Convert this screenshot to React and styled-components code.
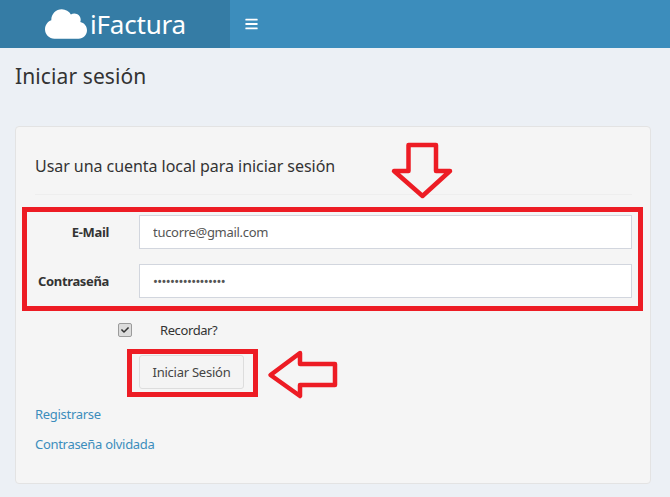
import React from 'react'
import styled, { createGlobalStyle } from 'styled-components'
import { FaBars, FaCloud, FaCheck } from 'react-icons/fa'

const GlobalStyle = createGlobalStyle`
    html, body {
        margin: 0;
        padding: 0;
        background: #ecf0f5;
    }
    body {
        font-family: "Noto Sans", "Open Sans", sans-serif;
        color: #333;
    }
`

const Page = styled.div`
    position: relative;
    width: 670px;
    height: 497px;
    overflow: hidden;
    background: #ecf0f5;
`

const Header = styled.header`
    display: flex;
    height: 48px;
    background: #3c8dbc;
`

const Logo = styled.div`
    display: flex;
    align-items: center;
    width: 230px;
    padding-left: 45px;
    box-sizing: border-box;
    background: #357ca5;
    color: #fff;
    font-size: 26px;
    letter-spacing: -0.2px;

    svg {
        width: 42px;
        height: 42px;
        margin-right: 3px;
    }
`

const MenuToggle = styled.div`
    display: flex;
    align-items: center;
    padding-left: 15px;
    color: #fff;

    svg {
        width: 13px;
        height: 14px;
    }
`

const Title = styled.h1`
    margin: 0;
    padding: 12px 15px 0;
    height: 65px;
    box-sizing: border-box;
    font-size: 21px;
    line-height: 32px;
    font-weight: 400;
    letter-spacing: 0.1px;
    color: #333;
`

const Card = styled.section`
    margin: 13px 19px 0 15px;
    height: 358px;
    padding: 28px 18px 0 19px;
    box-sizing: border-box;
    background: #f5f5f5;
    border: 1px solid #e3e3e3;
    border-radius: 4px;
`

const Subtitle = styled.h4`
    margin: 0;
    font-size: 16px;
    line-height: 22px;
    font-weight: 400;
    letter-spacing: -0.05px;
    color: #333;
`

const Divider = styled.hr`
    margin: 17px 0 20px;
    border: 0;
    border-top: 1px solid #eee;
`

const Row = styled.div`
    display: flex;
    align-items: center;
    height: 34px;
    margin-bottom: 15px;
`

const Label = styled.label`
    width: 74px;
    margin-right: 30px;
    flex-shrink: 0;
    text-align: right;
    font-size: 13px;
    font-weight: 700;
    letter-spacing: -0.35px;
    white-space: nowrap;
    color: #333;
`

const Input = styled.input`
    flex: 1;
    min-width: 0;
    height: 34px;
    padding: 0 13px;
    box-sizing: border-box;
    background: #fff;
    border: 1px solid #d2d6de;
    border-radius: 0;
    outline: none;
    font-family: inherit;
    font-size: 13px;
    letter-spacing: ${props => props.type === 'password' ? '-0.65px' : '-0.3px'};
    color: #555;
`

const CheckRow = styled.div`
    display: flex;
    align-items: center;
    height: 20px;
    margin: 22px 0 0 83px;
    font-size: 13px;
    letter-spacing: -0.4px;
    color: #333;
`

const CheckBox = styled.span`
    display: flex;
    align-items: center;
    justify-content: center;
    width: 12px;
    height: 12px;
    margin-right: 28px;
    background: #dcdcdc;
    border: 1px solid #9b9b9b;
    border-radius: 2px;
    color: #333;

    svg {
        width: 8px;
        height: 8px;
    }
`

const SubmitButton = styled.button`
    display: block;
    width: 105px;
    height: 34px;
    margin: 15px 0 0 104px;
    padding: 0;
    background: #f4f4f4;
    border: 1px solid #ddd;
    border-radius: 3px;
    font-family: inherit;
    font-size: 13px;
    letter-spacing: -0.25px;
    color: #444;
`

const FormLink = styled.a`
    display: block;
    margin-top: ${props => props.$first ? '16px' : '12px'};
    line-height: 18px;
    font-size: 13px;
    letter-spacing: -0.3px;
    color: #3c8dbc;
    text-decoration: none;
`

const Highlight = styled.div`
    position: absolute;
    box-sizing: border-box;
    left: ${props => props.$left}px;
    top: ${props => props.$top}px;
    width: ${props => props.$width}px;
    height: ${props => props.$height}px;
    border: 5px solid #ed1c24;
`

const Arrow = styled.svg`
    position: absolute;
    left: ${props => props.$left}px;
    top: ${props => props.$top}px;
    fill: none;
    stroke: #ed1c24;
    stroke-width: 4.5;
    stroke-linejoin: round;
`

export default function App() {
    return (
        <Page>
            <GlobalStyle />
            <Header>
                <Logo><FaCloud />iFactura</Logo>
                <MenuToggle><FaBars /></MenuToggle>
            </Header>
            <Title>Iniciar sesión</Title>
            <Card>
                <Subtitle>Usar una cuenta local para iniciar sesión</Subtitle>
                <Divider />
                <Row>
                    <Label>E-Mail</Label>
                    <Input type="text" readOnly value="tucorre@gmail.com" />
                </Row>
                <Row>
                    <Label>Contraseña</Label>
                    <Input type="password" readOnly value="aaaaaaaaaaaaaaaaa" />
                </Row>
                <CheckRow>
                    <CheckBox><FaCheck /></CheckBox>
                    Recordar?
                </CheckRow>
                <SubmitButton>Iniciar Sesión</SubmitButton>
                <FormLink $first href="#">Registrarse</FormLink>
                <FormLink href="#">Contraseña olvidada</FormLink>
            </Card>

            <Highlight $left={22} $top={207} $width={621} $height={104} />
            <Highlight $left={127} $top={349} $width={131} $height={48} />
            <Arrow $left={388} $top={141} width="68" height="60" viewBox="0 0 68 60">
                <path d="M20.5 4 H 48 V 30 H 62 L 34.5 55 L 6 30 H 20.5 Z" />
            </Arrow>
            <Arrow $left={265} $top={348} width="75" height="52" viewBox="0 0 75 52">
                <path d="M35 5 L 5.5 27 L 35 48 V 37 H 70 V 16 H 35 Z" />
            </Arrow>
        </Page>
    )
}
